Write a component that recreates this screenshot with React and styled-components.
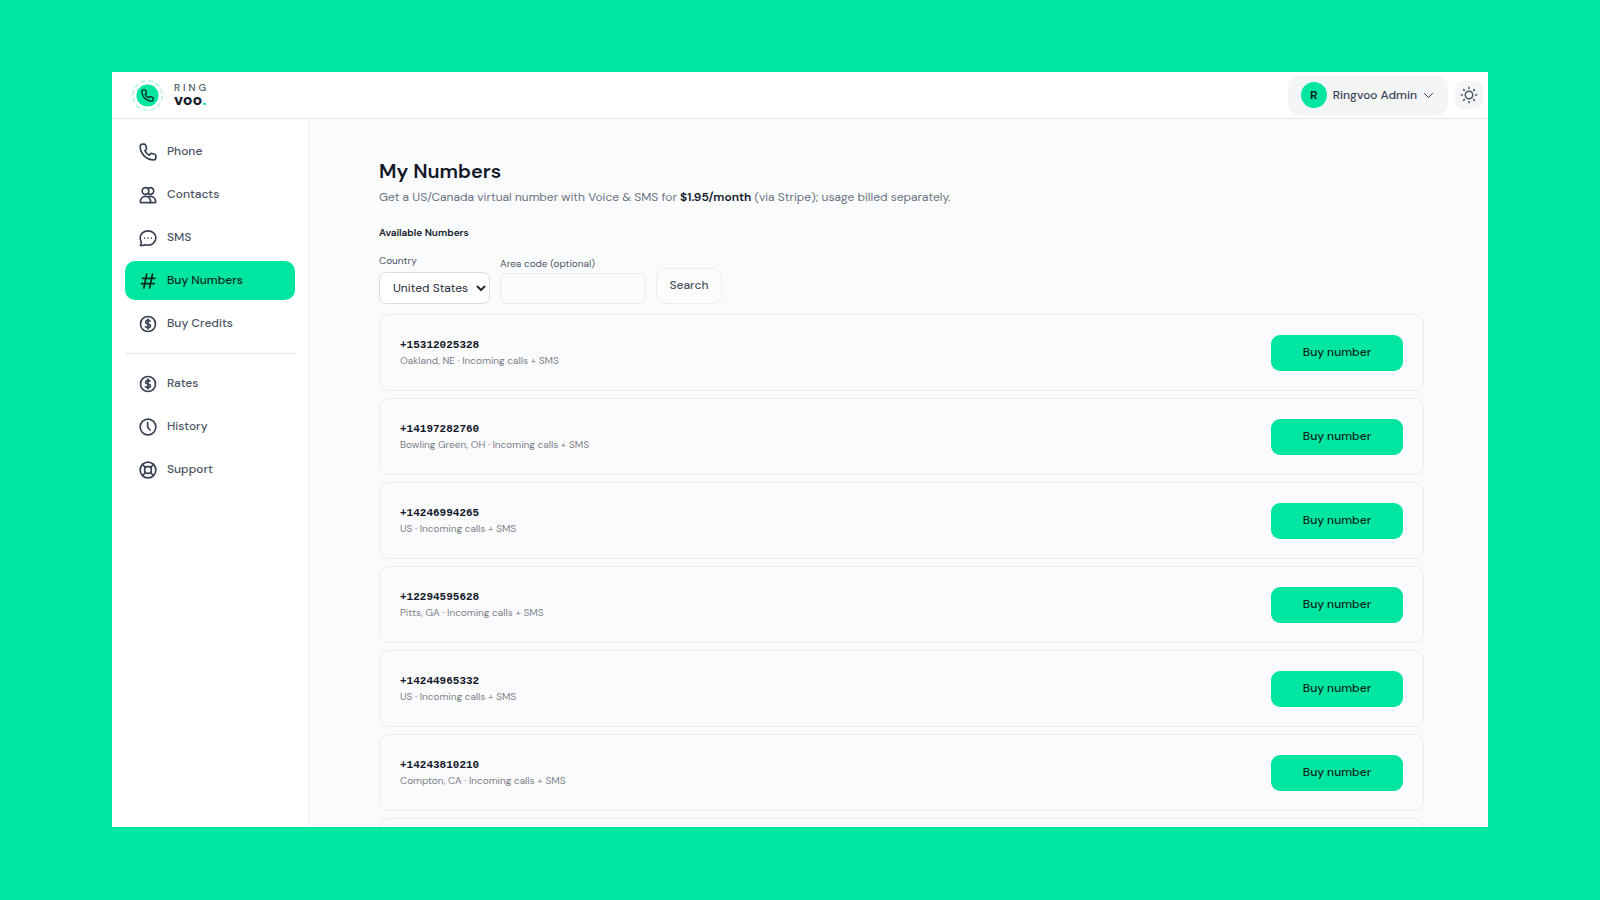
import React, { useState } from 'react'
import styled, { createGlobalStyle } from 'styled-components'
import { HiOutlineCurrencyDollar } from 'react-icons/hi2'


const GlobalStyle = createGlobalStyle`
    * {
        box-sizing: border-box;
    }
    body {
        margin: 0;
        background: #00E7A2;
        font-family: 'DM Sans', Roboto, 'Liberation Sans', sans-serif;
        font-optical-sizing: none;
        font-size: 12px;
        line-height: 16px;
        color: #111827;
    }
    button, input, select {
        font: inherit;
        font-optical-sizing: none;
    }
`

const Page = styled.div`
    height: 100vh;
    padding: 72px 7% 73px;
`

const Window = styled.div`
    height: 100%;
    display: flex;
    flex-direction: column;
    overflow: hidden;
    background: #FFFFFF;
`

const Header = styled.header`
    flex: none;
    height: 47px;
    padding: 0 5px 0 20px;
    display: flex;
    align-items: center;
    justify-content: space-between;
    border-bottom: 1px solid #E5E7EB;
`

const Logo = styled.a`
    display: flex;
    align-items: center;
    gap: 11px;
    color: #111827;
    text-decoration: none;
`

const LogoText = styled.span`
    padding-bottom: 3px;
    display: flex;
    flex-direction: column;
`

const LogoTop = styled.span`
    font-weight: 500;
    font-size: 10px;
    line-height: 11px;
    letter-spacing: 3px;
    color: #4B5563;
`

const LogoBottom = styled.span`
    font-weight: 800;
    font-size: 16px;
    line-height: 13px;
`

const LogoDot = styled.span`
    color: #00E6A0;
`

const HeaderActions = styled.div`
    display: flex;
    align-items: center;
    gap: 7px;
`

const AccountBtn = styled.button`
    height: 39px;
    padding: 0 14px 0 13px;
    display: flex;
    align-items: center;
    gap: 6px;
    border: 0;
    border-radius: 10px;
    background: #F4F5F7;
    font-weight: 500;
    color: #374151;
    cursor: pointer;
`

const Avatar = styled.span`
    width: 26px;
    height: 26px;
    border-radius: 50%;
    display: flex;
    align-items: center;
    justify-content: center;
    background: #00E6A0;
    font-weight: 700;
    color: #06281D;
`

const ThemeBtn = styled.button`
    width: 28px;
    height: 28px;
    padding: 0;
    display: flex;
    align-items: center;
    justify-content: center;
    border: 0;
    border-radius: 8px;
    background: #F4F5F7;
    color: #4B5563;
    cursor: pointer;
`

const Body = styled.div`
    flex: 1;
    min-height: 0;
    display: flex;
`

const Sidebar = styled.nav`
    flex: none;
    width: 197px;
    padding: 13px 13px 0;
    display: flex;
    flex-direction: column;
    gap: 4px;
    border-right: 1px solid #EEF0F3;
`

const NavItem = styled.a`
    height: 39px;
    padding: 0 13px;
    display: flex;
    align-items: center;
    gap: 9px;
    border-radius: 10px;
    background: ${({ $active }) => ($active ? '#00E6A0' : 'transparent')};
    font-weight: 500;
    color: ${({ $active }) => ($active ? '#06281D' : '#4B5563')};
    text-decoration: none;

    svg {
        width: 20px;
        height: 20px;
        stroke-width: 2;
        color: ${({ $active }) => ($active ? '#06281D' : '#374151')};
    }
`

const NavLabel = styled.span`
    padding-bottom: 2px;
`

const Divider = styled.hr`
    width: 100%;
    height: 1px;
    margin: 6px 0;
    border: 0;
    background: #E5E7EB;
`

const Main = styled.main`
    flex: 1;
    min-width: 0;
    padding: 38px 64px 0 70px;
    overflow: hidden;
    background: #FAFBFD;
`

const Title = styled.h1`
    margin: 0;
    font-weight: 600;
    font-size: 20px;
    line-height: 28px;
    font-optical-sizing: auto;
`

const Lead = styled.p`
    margin: 2px 0 18px;
    line-height: 20px;
    color: #6B7280;
`

const Price = styled.strong`
    font-weight: 600;
    color: #111827;
`

const SubTitle = styled.h2`
    margin: 0;
    font-weight: 600;
    font-size: 10px;
    line-height: 16px;
`

const Filters = styled.form`
    margin: 12px 0 10px;
    display: flex;
    align-items: flex-end;
    gap: 10px;
`

const Field = styled.div`
    display: flex;
    flex-direction: column;
    gap: ${({ $gap }) => $gap}px;
`

const Label = styled.label`
    font-size: 10px;
    color: #4B5563;
`

const CountrySelect = styled.select`
    width: 111px;
    height: 32px;
    padding: 0 0 0 9px;
    border: 1px solid #D9DCE1;
    border-radius: 7px;
    background: #FFFFFF;
    color: #1F2937;
`

const AreaInput = styled.input`
    width: 146px;
    height: 31px;
    padding: 0 12px;
    border: 1px solid #E8EAED;
    border-radius: 7px;
    background: #FAFBFC;
`

const SearchBtn = styled.button`
    height: 36px;
    width: 66px;
    padding: 0 0 2px;
    border: 1px solid #ECEDF0;
    border-radius: 10px;
    background: #FCFCFD;
    font-weight: 500;
    color: #4B5563;
    cursor: pointer;
`

const NumberList = styled.ul`
    margin: 0;
    padding: 0;
    display: flex;
    flex-direction: column;
    gap: 7px;
    list-style: none;
`

const NumberCard = styled.li`
    flex: none;
    min-height: 77px;
    padding: 0 20px;
    display: flex;
    align-items: center;
    justify-content: space-between;
    border: 1px solid #EBECEF;
    border-radius: 10px;
    background: #FBFBFD;
`

const PhoneNumber = styled.div`
    font-family: 'Liberation Mono', monospace;
    font-weight: 700;
    font-size: 11px;
`

const Detail = styled.div`
    font-size: 10px;
    color: #7A7F87;
`

const BuyBtn = styled.button`
    width: 132px;
    height: 36px;
    padding: 0 0 2px;
    border: 0;
    border-radius: 9px;
    background: #00E6A0;
    font-weight: 500;
    color: #06281D;
    cursor: pointer;
`


const phonePath =
  'M5.2 2.6H7.4C8.3 2.6 9.1 3.2 9.3 4.1L10.2 7.4C10.4 8.2 10.1 8.9 9.5 9.4L8.2 10.4C9.4 12.8 11.2 14.6 13.6 15.8L14.6 14.5C15.1 13.9 15.8 13.6 16.6 13.8L19.9 14.7C20.8 14.9 21.4 15.7 21.4 16.6V18.8C21.4 20.3 20.2 21.4 18.8 21.4C9.9 21.4 2.6 14.1 2.6 5.2C2.6 3.7 3.8 2.6 5.2 2.6Z'

const LogoMark = () => (
  <svg width="31" height="31" viewBox="0 0 31 31" fill="none">
    <circle cx="15.5" cy="15.5" r="14.7" stroke="#A5F3DA" strokeWidth="1.2" strokeDasharray="5 2.7" />
    <circle cx="15.5" cy="15.5" r="11" fill="#00E6A0" />
    <path transform="translate(8.3 8.3) scale(0.6)" d={phonePath} stroke="#06281D" strokeWidth="2.2" strokeLinejoin="round" />
  </svg>
)

const NavIcon = ({ children }) => (
  <svg viewBox="0 0 24 24" fill="none" stroke="currentColor" strokeLinecap="round" strokeLinejoin="round" aria-hidden="true">
    {children}
  </svg>
)

const PhoneIcon = () => (
  <NavIcon>
    <path d={phonePath} />
  </NavIcon>
)

const ContactsIcon = () => (
  <NavIcon>
    <circle cx="9" cy="7.2" r="4" />
    <path d="M12 4.4A4 4 0 1 1 12 10" />
    <path d="M2.8 20.4C2.8 16.6 5.4 13.6 9 13.6S15.2 16.6 15.2 20.4C15.2 20.9 14.9 21.2 14.4 21.2H3.6C3.1 21.2 2.8 20.9 2.8 20.4Z" />
    <path d="M12.8 13.9C13.5 13.7 14.2 13.6 15 13.6C18.6 13.6 21.2 16.6 21.2 20.4C21.2 20.9 20.9 21.2 20.4 21.2H15" />
  </NavIcon>
)

const ChatIcon = () => (
  <NavIcon>
    <path d="M12 3.4C17.2 3.4 21.4 7.2 21.4 12S17.2 20.6 12 20.6C10.8 20.6 9.7 20.4 8.7 20.1C7 20.9 5 21.2 2.9 20.9C3.6 19.9 4 18.6 4 17.2C3.1 15.7 2.6 13.9 2.6 12C2.6 7.2 6.8 3.4 12 3.4Z" />
    <path d="M8 12h.01M12 12h.01M16 12h.01" />
  </NavIcon>
)

const HashIcon = () => (
  <NavIcon>
    <path d="M10.4 3.6L7 20.4M17.4 3.6L14 20.4M5.2 8.8H20.4M4.2 15.2H19.4" />
  </NavIcon>
)

const ClockIcon = () => (
  <NavIcon>
    <circle cx="12" cy="12" r="9.4" />
    <path d="M11.6 6.8v5.4l2.8 3.4" />
  </NavIcon>
)

const SupportIcon = () => (
  <NavIcon>
    <circle cx="12" cy="12" r="9.4" />
    <rect x="8" y="8" width="8" height="8" rx="3" />
    <path d="M5.4 5.4l3.4 3.4M18.6 5.4l-3.4 3.4M5.4 18.6l3.4-3.4M18.6 18.6l-3.4-3.4" />
  </NavIcon>
)

const SunIcon = () => (
  <svg width="18" height="18" viewBox="0 0 24 24" fill="none" stroke="currentColor" strokeWidth="2" strokeLinecap="round">
    <circle cx="12" cy="12" r="5" />
    <path d="M12 1.8v1.4M12 20.8v1.4M1.8 12h1.4M20.8 12h1.4M4.8 4.8l1 1M18.2 18.2l1 1M4.8 19.2l1-1M18.2 5.8l1-1" />
  </svg>
)

const ChevronIcon = () => (
  <svg width="11" height="11" viewBox="0 0 11 11" fill="none" stroke="currentColor" strokeLinecap="round" strokeLinejoin="round">
    <path d="M1.5 3.5l4 4l4-4" />
  </svg>
)


const mainLinks = [
  { label: 'Phone', Icon: PhoneIcon },
  { label: 'Contacts', Icon: ContactsIcon },
  { label: 'SMS', Icon: ChatIcon },
  { label: 'Buy Numbers', Icon: HashIcon },
  { label: 'Buy Credits', Icon: HiOutlineCurrencyDollar },
]

const moreLinks = [
  { label: 'Rates', Icon: HiOutlineCurrencyDollar },
  { label: 'History', Icon: ClockIcon },
  { label: 'Support', Icon: SupportIcon },
]

const numbers = [
  { number: '+15312025328', place: 'Oakland, NE' },
  { number: '+14197282760', place: 'Bowling Green, OH' },
  { number: '+14246994265', place: 'US' },
  { number: '+12294595628', place: 'Pitts, GA' },
  { number: '+14244965332', place: 'US' },
  { number: '+14243810210', place: 'Compton, CA' },
]


export default function App() {
  const [page, setPage] = useState('Buy Numbers')
  const [country, setCountry] = useState('US')
  const [areaCode, setAreaCode] = useState('')

  const renderLink = ({ label, Icon }) => (
    <NavItem key={label} href="#" $active={page === label} onClick={() => setPage(label)}>
      <Icon />
      <NavLabel>{label}</NavLabel>
    </NavItem>
  )

  return (
    <>
    <GlobalStyle />
    <Page>
      <Window>
        <Header>
          <Logo href="#">
            <LogoMark />
            <LogoText>
              <LogoTop>RING</LogoTop>
              <LogoBottom>voo<LogoDot>.</LogoDot></LogoBottom>
            </LogoText>
          </Logo>
          <HeaderActions>
            <AccountBtn type="button">
              <Avatar>R</Avatar>
              Ringvoo Admin
              <ChevronIcon />
            </AccountBtn>
            <ThemeBtn type="button" aria-label="Toggle theme">
              <SunIcon />
            </ThemeBtn>
          </HeaderActions>
        </Header>
        <Body>
          <Sidebar>
            {mainLinks.map(renderLink)}
            <Divider />
            {moreLinks.map(renderLink)}
          </Sidebar>
          <Main>
            <Title>My Numbers</Title>
            <Lead>
              Get a US/Canada virtual number with Voice &amp; SMS for <Price>$1.95/month</Price> (via Stripe); usage billed separately.
            </Lead>
            <SubTitle>Available Numbers</SubTitle>
            <Filters onSubmit={e => e.preventDefault()}>
              <Field $gap={3}>
                <Label htmlFor="country">Country</Label>
                <CountrySelect id="country" value={country} onChange={e => setCountry(e.target.value)}>
                  <option value="US">United States</option>
                  <option value="CA">Canada</option>
                </CountrySelect>
              </Field>
              <Field $gap={1}>
                <Label htmlFor="areaCode">Area code (optional)</Label>
                <AreaInput id="areaCode" value={areaCode} onChange={e => setAreaCode(e.target.value)} />
              </Field>
              <SearchBtn type="submit">Search</SearchBtn>
            </Filters>
            <NumberList>
              {numbers.map(({ number, place }) => (
                <NumberCard key={number}>
                  <div>
                    <PhoneNumber>{number}</PhoneNumber>
                    <Detail>{place} · Incoming calls + SMS</Detail>
                  </div>
                  <BuyBtn type="button">Buy number</BuyBtn>
                </NumberCard>
              ))}
              <NumberCard aria-hidden="true" />
            </NumberList>
          </Main>
        </Body>
      </Window>
    </Page>
    </>
  )
}
